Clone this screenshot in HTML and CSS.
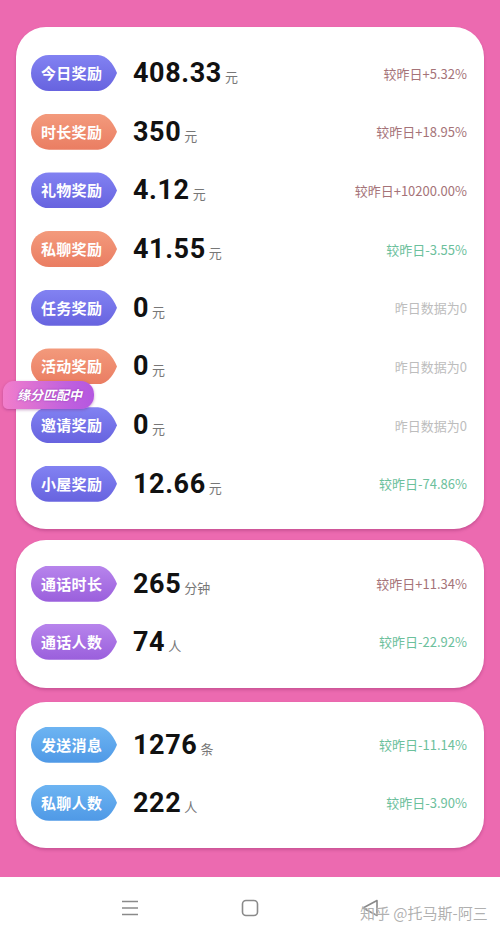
FILE: index.html
```html
<!DOCTYPE html>
<html>
  <head>
    <link rel="stylesheet" href="styles.css">
  </head>

  <body>

    <div class="content">
      <div class="card">
        <div class="row">
          <span class="tag blue">今日奖励</span>
          <span class="value">408.33<small>元</small></span>
          <span class="compare up">较昨日+5.32%</span>
        </div>
        <div class="row">
          <span class="tag orange">时长奖励</span>
          <span class="value">350<small>元</small></span>
          <span class="compare up">较昨日+18.95%</span>
        </div>
        <div class="row">
          <span class="tag blue">礼物奖励</span>
          <span class="value">4.12<small>元</small></span>
          <span class="compare up">较昨日+10200.00%</span>
        </div>
        <div class="row">
          <span class="tag orange">私聊奖励</span>
          <span class="value">41.55<small>元</small></span>
          <span class="compare down">较昨日-3.55%</span>
        </div>
        <div class="row">
          <span class="tag blue">任务奖励</span>
          <span class="value">0<small>元</small></span>
          <span class="compare zero">昨日数据为0</span>
        </div>
        <div class="row">
          <span class="tag orange">活动奖励</span>
          <span class="value">0<small>元</small></span>
          <span class="compare zero">昨日数据为0</span>
        </div>
        <div class="row">
          <span class="tag blue">邀请奖励</span>
          <span class="value">0<small>元</small></span>
          <span class="compare zero">昨日数据为0</span>
        </div>
        <div class="row">
          <span class="tag blue">小屋奖励</span>
          <span class="value">12.66<small>元</small></span>
          <span class="compare down">较昨日-74.86%</span>
        </div>
      </div>

      <div class="card small">
        <div class="row">
          <span class="tag purple">通话时长</span>
          <span class="value">265<small>分钟</small></span>
          <span class="compare up">较昨日+11.34%</span>
        </div>
        <div class="row">
          <span class="tag purple">通话人数</span>
          <span class="value">74<small>人</small></span>
          <span class="compare down">较昨日-22.92%</span>
        </div>
      </div>

      <div class="card small last">
        <div class="row">
          <span class="tag sky">发送消息</span>
          <span class="value">1276<small>条</small></span>
          <span class="compare down">较昨日-11.14%</span>
        </div>
        <div class="row">
          <span class="tag sky">私聊人数</span>
          <span class="value">222<small>人</small></span>
          <span class="compare down">较昨日-3.90%</span>
        </div>
      </div>

      <div class="match-float">缘分匹配中</div>
    </div>

    <div class="navbar">
      <svg width="20" height="18" viewBox="0 0 20 18">
        <path d="M2 2.5 H18 M2 9 H18 M2 15.5 H18" stroke="#8a8a8a" stroke-width="1.6" fill="none"/>
      </svg>
      <svg width="20" height="20" viewBox="0 0 20 20">
        <rect x="2.5" y="2.5" width="15" height="15" rx="3.5" stroke="#8a8a8a" stroke-width="1.6" fill="none"/>
      </svg>
      <svg width="20" height="20" viewBox="0 0 20 20">
        <path d="M17 2.5 L3 10 L17 17.5 Z" stroke="#8a8a8a" stroke-width="1.6" stroke-linejoin="round" fill="none"/>
      </svg>
      <div class="watermark">知乎 @托马斯-阿三</div>
    </div>

  </body>
</html>
```

FILE: styles.css
```css
body {
  margin: 0;
  font-family: "Noto Sans CJK SC", "Noto Sans", sans-serif;
  background: #fff;
}

.content {
  position: relative;
  background: #ec6ab0;
  padding: 27px 16px 28px 16px;
  height: 822px;
}

.card {
  background: #fff;
  border-radius: 30px;
  padding: 28px 17px 27px 15px;
  display: flex;
  flex-direction: column;
  gap: 22.7px;
  box-shadow: 0 2px 3px rgba(140, 40, 100, 0.35);
  margin-bottom: 11px;
}

.card.small {
  padding: 26px 17px 28px 15px;
  gap: 22px;
  margin-bottom: 14px;
}

.card.small.last {
  padding: 25px 17px 27px 15px;
}

.row {
  display: flex;
  align-items: center;
  height: 36px;
}

.tag {
  width: 86px;
  height: 36px;
  line-height: 36px;
  padding-left: 10px;
  box-sizing: border-box;
  color: #fff;
  font-size: 15px;
  font-weight: 700;
  letter-spacing: 0.3px;
  clip-path: path('M18 0 H67 Q79 1 86 18 Q79 35 67 36 H18 A18 18 0 0 1 18 0 Z');
  flex-shrink: 0;
}

.tag.blue {
  background: linear-gradient(#8282f2, #6763df);
}

.tag.orange {
  background: linear-gradient(#f39a7c, #ea7d62);
}

.tag.purple {
  background: linear-gradient(#b784ec, #9a5fdc);
}

.tag.sky {
  background: linear-gradient(#6db4f2, #4f99e6);
}

.value {
  margin-left: 16px;
  font-family: Roboto, "Noto Sans", sans-serif;
  font-weight: 700;
  font-size: 27px;
  letter-spacing: 0.6px;
  color: #111;
  flex: 1;
}

.value small {
  font-family: "Noto Sans CJK SC", sans-serif;
  font-weight: 400;
  font-size: 13px;
  color: #777;
  margin-left: 3px;
  letter-spacing: 0;
}

.compare {
  font-size: 13px;
}

.compare.up {
  color: #a57378;
}

.compare.down {
  color: #6cc09c;
}

.compare.zero {
  color: #bdbdbd;
}

.match-float {
  position: absolute;
  left: 3px;
  top: 381px;
  padding: 5px 12px 5px 14px;
  border-radius: 11px 13px 13px 5px;
  background: linear-gradient(90deg, #f27ecb, #c061de 70%, #b457e0);
  color: #fff;
  font-size: 13px;
  line-height: 18px;
  font-weight: 700;
  font-style: italic;
  text-shadow: 0 0 2px #8a2fae;
  box-shadow: 0 1px 3px rgba(120, 30, 120, 0.4);
}

.navbar {
  position: relative;
  height: 61px;
  display: flex;
  justify-content: center;
  align-items: center;
  gap: 100px;
}

.watermark {
  position: absolute;
  left: 360px;
  top: 25px;
  font-size: 15px;
  color: rgba(150, 150, 150, 0.75);
  text-shadow: 0 0 1px #fff;
}
```
